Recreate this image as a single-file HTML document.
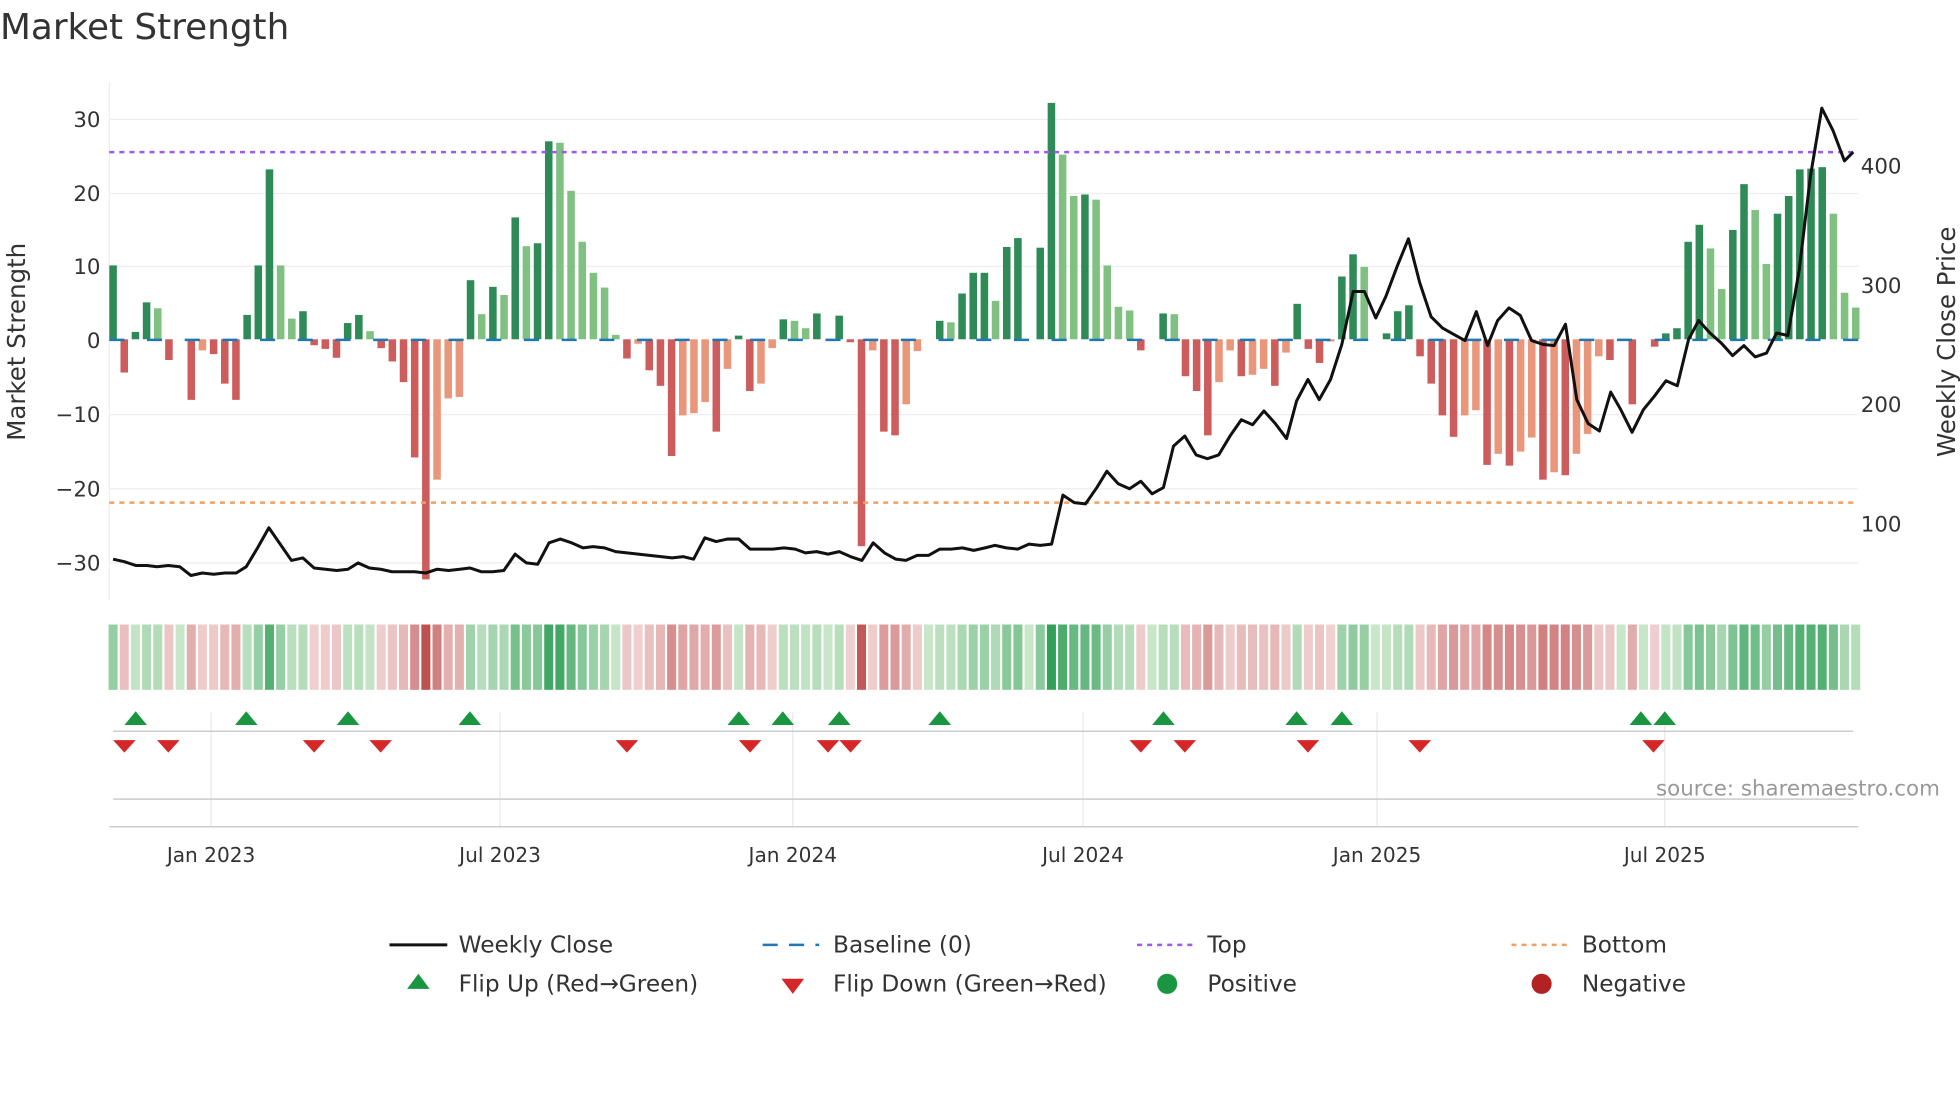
<!DOCTYPE html>
<html><head><meta charset="utf-8"><style>
html,body{margin:0;padding:0;background:#fff;}
svg{display:block;font-family:"DejaVu Sans","Liberation Sans",sans-serif;}
</style></head><body>
<svg id="s" width="1960" height="1102" viewBox="0 0 1560 877" xmlns="http://www.w3.org/2000/svg">
<rect width="1560" height="877" fill="#fff"/>
<text x="0" y="31" font-size="28.5" fill="#333">Market Strength</text>
<g id="grid" stroke="#eeeef2" stroke-width="1">
<line x1="87" x2="1479" y1="95" y2="95"/><line x1="87" x2="1479" y1="154" y2="154"/>
<line x1="87" x2="1479" y1="212" y2="212"/><line x1="87" x2="1479" y1="330" y2="330"/>
<line x1="87" x2="1479" y1="389" y2="389"/><line x1="87" x2="1479" y1="448" y2="448"/>
<line x1="87" x2="87" y1="65" y2="478"/>
</g>
<g font-size="17" fill="#333" text-anchor="end">
<text x="80" y="101">30</text><text x="80" y="160">20</text><text x="80" y="218">10</text>
<text x="80" y="277">0</text><text x="80" y="336">−10</text><text x="80" y="395">−20</text><text x="80" y="454">−30</text>
</g>
<g font-size="17" fill="#333">
<text x="1481" y="138">400</text><text x="1481" y="233">300</text><text x="1481" y="328">200</text><text x="1481" y="423">100</text>
</g>
<text transform="translate(20,272) rotate(-90)" font-size="19.5" fill="#333" text-anchor="middle">Market Strength</text>
<text transform="translate(1556,272) rotate(-90)" font-size="19.5" fill="#333" text-anchor="middle">Weekly Close Price</text>
<g id="bars"></g>
<line x1="87" x2="1479" y1="270.5" y2="270.5" stroke="#1f77b4" stroke-width="2" stroke-dasharray="12 18"/>
<line x1="87" x2="1479" y1="121" y2="121" stroke="#9b5de5" stroke-width="2" stroke-dasharray="4 4"/>
<line x1="87" x2="1479" y1="400" y2="400" stroke="#f0a060" stroke-width="2" stroke-dasharray="4 4"/>
<polyline id="price" fill="none" stroke="#111" stroke-width="2.4" stroke-linejoin="round"/>
<g id="heat"></g>
<g stroke="#e8e8ec" stroke-width="1">
<line x1="168" x2="168" y1="567" y2="658"/><line x1="398" x2="398" y1="567" y2="658"/>
<line x1="631" x2="631" y1="567" y2="658"/><line x1="862" x2="862" y1="567" y2="658"/>
<line x1="1096" x2="1096" y1="567" y2="658"/><line x1="1325" x2="1325" y1="567" y2="658"/>
</g>
<line x1="90" x2="1475" y1="582" y2="582" stroke="#ccc" stroke-width="1.2"/>
<line x1="90" x2="1475" y1="636" y2="636" stroke="#ccc" stroke-width="1.2"/>
<line x1="87" x2="1479" y1="658" y2="658" stroke="#ccc" stroke-width="1.2"/>
<g id="tri"></g>
<text x="1544" y="633" font-size="17" fill="#999" text-anchor="end">source: sharemaestro.com</text>
<g font-size="16" fill="#333" text-anchor="middle">
<text x="168" y="686">Jan 2023</text><text x="398" y="686">Jul 2023</text><text x="631" y="686">Jan 2024</text>
<text x="862" y="686">Jul 2024</text><text x="1096" y="686">Jan 2025</text><text x="1325" y="686">Jul 2025</text>
</g>
<g font-size="18.5" fill="#333">
<line x1="310" x2="356" y1="752" y2="752" stroke="#111" stroke-width="2.4"/>
<text x="365" y="758">Weekly Close</text>
<line x1="607" x2="652" y1="752" y2="752" stroke="#1f77b4" stroke-width="2" stroke-dasharray="12 9"/>
<text x="663" y="758">Baseline (0)</text>
<line x1="905" x2="950" y1="752" y2="752" stroke="#9b5de5" stroke-width="2" stroke-dasharray="4 4"/>
<text x="961" y="758">Top</text>
<line x1="1203" x2="1248" y1="752" y2="752" stroke="#f0a060" stroke-width="2" stroke-dasharray="4 4"/>
<text x="1259" y="758">Bottom</text>
<polygon points="324,787 342,787 333,775" fill="#1a9641"/>
<text x="365" y="789">Flip Up (Red→Green)</text>
<polygon points="622,779 640,779 631,791" fill="#d62728"/>
<text x="663" y="789">Flip Down (Green→Red)</text>
<circle cx="929" cy="783" r="8" fill="#1a9641"/>
<text x="961" y="789">Positive</text>
<circle cx="1227" cy="783" r="8" fill="#b22222"/>
<text x="1259" y="789">Negative</text>
</g>
</svg>
<script>
var V=[10,-4.5,1,5,4.2,-2.8,0,-8.2,-1.5,-2,-6,-8.2,3.3,10,23,10,2.8,3.8,-0.8,-1.3,-2.5,2.2,3.3,1.1,-1.2,-3,-5.8,-16,-32.5,-19,-8,-7.8,8,3.4,7.1,6,16.5,12.6,13,26.8,26.6,20.1,13.2,9,7,0.6,-2.6,-0.6,-4.2,-6.3,-15.8,-10.3,-10,-8.5,-12.5,-4,0.5,-7,-6,-1.2,2.7,2.5,1.5,3.5,0,3.2,-0.4,-28,-1.5,-12.5,-13,-8.8,-1.6,0,2.5,2.3,6.2,9,9,5.2,12.5,13.7,0,12.4,32,25,19.4,19.6,18.9,10,4.4,3.9,-1.5,0,3.5,3.4,-5,-7,-13,-5.8,-1.5,-5,-4.8,-4,-6.3,-1.8,4.8,-1.3,-3.2,-0.3,8.5,11.5,9.8,0,0.8,3.8,4.6,-2.3,-6,-10.3,-13.2,-10.3,-9.6,-17,-15.5,-17.1,-15.2,-13.3,-19,-18,-18.4,-15.5,-12.8,-2.3,-2.8,0,-8.8,0,-1,0.8,1.5,13.2,15.5,12.3,6.8,14.8,21,17.5,10.2,17,19.4,23,23.1,23.3,17,6.3,4.3];
var N=V.length,step=(1477-90)/(N-1),ns="http://www.w3.org/2000/svg";
function el(t,a,p){var e=document.createElementNS(ns,t);for(var k in a)e.setAttribute(k,a[k]);p.appendChild(e);return e;}
var bars=document.getElementById('bars'),heat=document.getElementById('heat');
for(var i=0;i<N;i++){var v=V[i],x=90+i*step,prev=i?V[i-1]:0;
 var c;if(v>=0)c=(v>=prev)?'#2e8b57':'#80c080';else c=(v<=prev)?'#cd5c5c':'#e9967a';
 if(v!==0){var h=Math.abs(v)*5.88;el('rect',{x:x-3,y:v>0?270-h:270,width:6,height:h,fill:c},bars);}
 var t=Math.min(1,Math.abs(v)/30),hc;
 if(v>=0){hc='rgb('+Math.round(200-150*t)+','+Math.round(230-70*t)+','+Math.round(200-110*t)+')';}
 else{hc='rgb('+Math.round(240-50*t)+','+Math.round(210-130*t)+','+Math.round(210-130*t)+')';}
 el('rect',{x:x-3.6,y:497,width:7.2,height:52,fill:hc},heat);}
var P=[[90,445],[99,447],[108,450],[117,450],[125,451],[134,450],[143,451],[152,458],[161,456],[170,457],[179,456],[188,456],[196,451],[205,436],[214,420],[223,433],[232,446],[241,444],[250,452],[259,453],[268,454],[277,453],[285,448],[294,452],[303,453],[312,455],[321,455],[330,455],[339,456],[348,453],[357,454],[366,453],[374,452],[383,455],[392,455],[401,454],[410,441],[419,448],[428,449],[437,432],[446,429],[455,432],[464,436],[472,435],[481,436],[490,439],[499,440],[508,441],[517,442],[526,443],[535,444],[544,443],[552,445],[561,428],[570,431],[579,429],[588,429],[597,437],[606,437],[615,437],[624,436],[633,437],[641,440],[650,439],[659,441],[668,439],[677,443],[686,446],[695,432],[704,440],[713,445],[721,446],[730,442],[739,442],[748,437],[757,437],[766,436],[775,438],[784,436],[792,434],[801,436],[810,437],[819,433],[828,434],[837,433],[846,394],[855,400],[864,401],[873,388],[881,375],[890,385],[899,389],[908,383],[917,393],[926,388],[934,355],[943,347],[952,362],[961,365],[970,362],[979,347],[988,334],[997,338],[1006,327],[1015,337],[1024,349],[1032,319],[1041,302],[1050,318],[1059,302],[1068,274],[1077,232],[1086,232],[1095,253],[1103,236],[1112,212],[1121,190],[1130,225],[1139,252],[1148,261],[1157,266],[1166,271],[1175,248],[1184,275],[1192,255],[1201,245],[1210,251],[1219,271],[1228,274],[1237,275],[1246,258],[1255,318],[1264,337],[1273,343],[1282,312],[1290,326],[1299,344],[1308,326],[1317,315],[1326,303],[1335,307],[1344,270],[1352,255],[1361,265],[1370,273],[1379,283],[1388,275],[1397,284],[1406,281],[1414,265],[1423,267],[1432,215],[1441,140],[1450,86],[1459,104],[1468,128],[1475,121]];
document.getElementById('price').setAttribute('points',P.map(function(p){return p.join(',')}).join(' '));
var tri=document.getElementById('tri');
[108,196,277,374,588,623,668,748,926,1032,1068,1306,1325].forEach(function(x){el('polygon',{points:(x-9)+',577 '+(x+9)+',577 '+x+',566',fill:'#1a9641'},tri);});
[99,134,250,303,499,597,659,677,908,943,1041,1130,1316].forEach(function(x){el('polygon',{points:(x-9)+',589 '+(x+9)+',589 '+x+',599',fill:'#d62728'},tri);});
</script>
</body></html>
